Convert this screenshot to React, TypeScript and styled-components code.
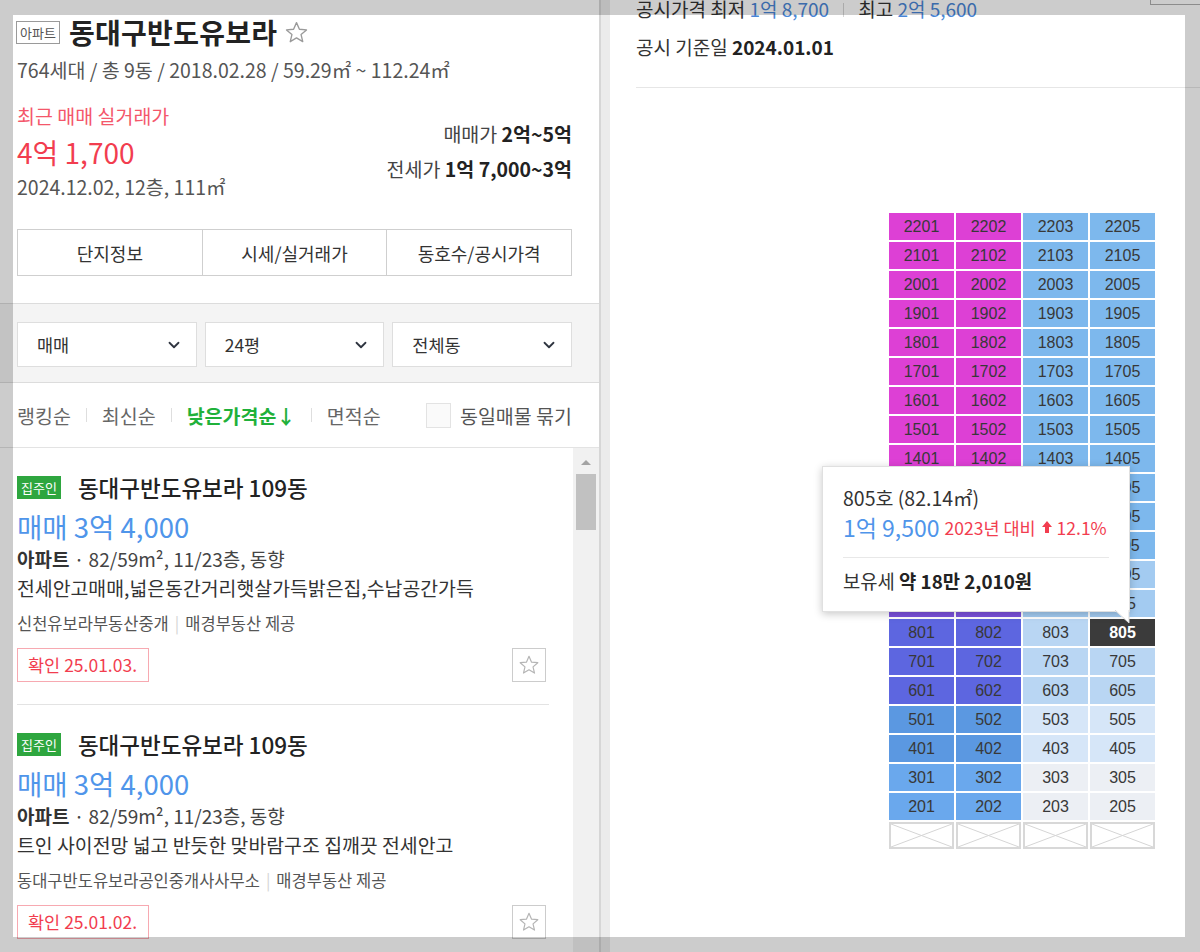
import React from 'react';
import styled, { createGlobalStyle } from 'styled-components';
import { ChevronDown } from 'lucide-react';

const GlobalStyle = createGlobalStyle`
  html, body {
    margin: 0;
    padding: 0;
    width: 1200px;
    height: 952px;
    overflow: hidden;
    background: #fff;
  }
  body {
    font-family: "Noto Sans CJK KR", "Noto Sans", sans-serif;
    color: #333;
  }
  * { box-sizing: border-box; }
`;

const Page = styled.div`
  position: relative;
  display: flex;
  width: 1200px;
  height: 952px;
  overflow: hidden;
`;

// capture frame: everything outside the selection is dimmed
const Shade = styled.div`
  position: absolute;
  left: 13px;
  top: 15px;
  width: 1172px;
  height: 922px;
  box-shadow: 0 0 0 1200px rgba(0, 0, 0, 0.2);
  pointer-events: none;
  z-index: 10;
`;

/* ---------- left panel ---------- */

const LeftPanel = styled.aside`
  width: 601px;
  flex-shrink: 0;
  display: flex;
  flex-direction: column;
  border-right: 2px solid #d6d6d6;
`;

const Gutter = styled.div`
  width: 9px;
  flex-shrink: 0;
  background: #ebebeb;
`;

const Header = styled.header`
  padding: 16px 27px 27px 16px;
`;

const TitleRow = styled.div`
  display: flex;
  align-items: center;
  height: 32px;
`;

const TypeBadge = styled.span`
  height: 23px;
  padding: 0 3px;
  border: 1px solid #9a9a9a;
  font-size: 13px;
  line-height: 21px;
  color: #555;
`;

const ComplexName = styled.h1`
  margin: 0 0 0 9px;
  font-size: 28px;
  font-weight: 700;
  line-height: 32px;
  letter-spacing: 0.3px;
  color: #222;
`;

const FavStar = styled.span`
  display: flex;
  margin-left: 7px;
`;

const SubLine = styled.div`
  margin-top: 11px;
  padding-left: 1px;
  font-size: 19.5px;
  line-height: 22px;
  color: #555;
`;

const PriceBlock = styled.div`
  display: flex;
  justify-content: space-between;
  align-items: center;
  margin-top: 24px;
  padding-left: 1px;
`;

const RecentLabel = styled.div`
  font-size: 19.5px;
  line-height: 22px;
  color: #f4576b;
`;

const RecentPrice = styled.div`
  margin: 7px 0 6px;
  font-size: 28px;
  line-height: 36px;
  color: #f23d4f;
`;

const RecentMeta = styled.div`
  font-size: 19.5px;
  line-height: 22px;
  color: #555;
`;

const RangeList = styled.div`
  display: flex;
  flex-direction: column;
  align-items: flex-end;
  gap: 11px;
`;

const RangeLine = styled.div`
  font-size: 19.5px;
  line-height: 24px;
  color: #444;
  b { color: #222; }
`;

const Tabs = styled.nav`
  display: flex;
  margin-top: 31px;
  margin-left: 1px;
  height: 47px;
  border: 1px solid #cfcfcf;
`;

const Tab = styled.div`
  flex: 1;
  display: flex;
  align-items: center;
  justify-content: center;
  font-size: 18px;
  color: #333;
  & + & { border-left: 1px solid #cfcfcf; }
`;

const FilterBar = styled.div`
  display: flex;
  gap: 8px;
  padding: 18px 27px 15px 17px;
  background: #f4f4f4;
  border-top: 1px solid #dcdcdc;
  border-bottom: 1px solid #dcdcdc;
`;

const Select = styled.div`
  flex: 1;
  height: 45px;
  display: flex;
  align-items: center;
  justify-content: space-between;
  padding: 0 13px 0 19px;
  background: #fff;
  border: 1px solid #dedede;
  font-size: 17.5px;
  color: #333;
`;

const SortRow = styled.div`
  display: flex;
  align-items: center;
  height: 65px;
  padding: 0 27px 0 17px;
  border-bottom: 1px solid #e3e3e3;
`;

const SortItem = styled.span<{ $active?: boolean }>`
  font-size: 19.5px;
  color: ${p => (p.$active ? '#1fb13a' : '#666')};
  font-weight: ${p => (p.$active ? 700 : 400)};
`;

const SortSep = styled.span`
  width: 1px;
  height: 14px;
  margin: 0 15px;
  background: #dedede;
`;

const CheckBox = styled.span`
  width: 25px;
  height: 25px;
  margin-left: auto;
  border: 1px solid #e3e3e3;
  background: #fafafa;
`;

const CheckLabel = styled.span`
  margin-left: 9px;
  font-size: 19.5px;
  color: #555;
`;

const ListArea = styled.div`
  flex: 1;
  display: flex;
  min-height: 0;
`;

const ListBody = styled.div`
  flex: 1;
  padding: 0 24px 0 17px;
  overflow: hidden;
`;

const ScrollTrack = styled.div`
  width: 26px;
  display: flex;
  flex-direction: column;
  align-items: center;
  padding-top: 12px;
  background: #f1f1f1;
`;

const ScrollArrow = styled.span`
  width: 0;
  height: 0;
  border-left: 5px solid transparent;
  border-right: 5px solid transparent;
  border-bottom: 5px solid #a3a3a3;
`;

const ScrollThumb = styled.span`
  width: 20px;
  height: 56px;
  margin-top: 9px;
  background: #c1c1c1;
`;

const Item = styled.article`
  padding: 24px 0 22px;
  border-bottom: 1px solid #e3e3e3;
`;

const ItemTitleRow = styled.div`
  display: flex;
  align-items: center;
  height: 30px;
`;

const OwnerBadge = styled.span`
  height: 23px;
  padding: 0 4px;
  background: #2ea63f;
  color: #fff;
  font-size: 13px;
  line-height: 23px;
`;

const ItemTitle = styled.h3`
  margin: 0 0 0 17px;
  font-size: 22.5px;
  font-weight: 500;
  line-height: 30px;
  color: #222;
`;

const ItemPrice = styled.div`
  margin-top: 7px;
  font-size: 27.5px;
  line-height: 34px;
  color: #4f95ea;
`;

const ItemInfo = styled.div`
  margin-top: 4px;
  font-size: 19px;
  line-height: 24px;
  color: #444;
  b { color: #333; }
`;

const ItemDesc = styled.div`
  margin-top: 5px;
  font-size: 19.4px;
  line-height: 24px;
  color: #333;
  white-space: nowrap;
`;

const ItemAgent = styled.div`
  margin-top: 12px;
  font-size: 16.5px;
  line-height: 22px;
  color: #555;
  span { margin: 0 6px; color: #d5d5d5; }
`;

const ItemFoot = styled.div`
  display: flex;
  justify-content: space-between;
  align-items: center;
  margin-top: 14px;
`;

const Confirmed = styled.span`
  height: 34px;
  padding: 0 11px 0 10px;
  border: 1px solid #f7a9b1;
  font-size: 17.5px;
  line-height: 32px;
  color: #f23d4f;
`;

const StarButton = styled.span`
  width: 34px;
  height: 34px;
  display: flex;
  align-items: center;
  justify-content: center;
  border: 1px solid #cccccc;
  margin-right: 3px;
`;

/* ---------- right panel ---------- */

const RightPanel = styled.main`
  flex: 1;
  display: flex;
  flex-direction: column;
`;

const PriceHeader = styled.div`
  display: flex;
  margin-left: 26px;
  padding-bottom: 28px;
  border-bottom: 1px solid #e6e6e6;
`;

const HeaderText = styled.div`
  flex: 1;
`;

const HeaderLine = styled.div<{ $gap?: number }>`
  margin-top: ${p => p.$gap ?? 0}px;
  font-size: 19px;
  line-height: ${p => (p.$gap ? 24 : 18)}px;
  color: #333;
  em { font-style: normal; color: #4a86d6; }
  b { color: #222; }
  i { display: inline-block; width: 1px; height: 14px; margin: 0 14px; background: #d5d5d5; }
`;

const HeaderButton = styled.span`
  width: 50px;
  height: 5px;
  border: 1px solid #b0b0b0;
  border-top: none;
  border-right: none;
`;

const BuildingArea = styled.section`
  padding: 125px 0 0 279px;
`;

const BuildingWrap = styled.div`
  position: relative;
  width: 268px;
`;

const FloorGrid = styled.div`
  display: grid;
  grid-template-columns: repeat(4, 65px);
  grid-auto-rows: 27px;
  gap: 2px;
`;

const Unit = styled.div<{ $bg: string; $picked?: boolean }>`
  display: flex;
  align-items: center;
  justify-content: center;
  background: ${p => p.$bg};
  font-family: "Liberation Sans", Arial, sans-serif;
  font-size: 16px;
  font-weight: ${p => (p.$picked ? 700 : 400)};
  color: ${p => (p.$picked ? '#fff' : '#383838')};
`;

const EmptyUnit = styled.div`
  display: flex;
  border: 2px solid #d8d8d8;
  background: #fff;
`;

const Tooltip = styled.div`
  position: absolute;
  left: -67px;
  top: 253px;
  width: 308px;
  padding: 20px 20px 18px;
  background: #fff;
  border: 1px solid #e0e0e0;
  box-shadow: 0 2px 8px rgba(0, 0, 0, 0.22);
  z-index: 2;
`;

const TipArrow = styled.svg`
  position: absolute;
  right: -1px;
  bottom: -13px;
`;

const TipUnit = styled.div`
  font-size: 19.5px;
  line-height: 22px;
  color: #333;
`;

const TipPrice = styled.div`
  display: flex;
  align-items: center;
  margin-top: 4px;
  height: 28px;
  font-size: 23px;
  color: #4f95ea;
`;

const TipDiff = styled.span`
  display: flex;
  align-items: center;
  margin-left: 5px;
  font-size: 17.5px;
  color: #f23d4f;
  svg { margin: 0 5px 0 6px; }
`;

const TipDivider = styled.hr`
  margin: 16px 0 11px;
  border: none;
  border-top: 1px solid #e8e8e8;
`;

const TipTax = styled.div`
  font-size: 18.8px;
  line-height: 24px;
  color: #333;
  b { color: #222; }
`;

/* ---------- data ---------- */

const listings = [
  {
    desc: '전세안고매매,넓은동간거리햇살가득밝은집,수납공간가득',
    agent: '신천유보라부동산중개',
    date: '25.01.03.',
  },
  {
    desc: '트인 사이전망 넓고 반듯한 맞바람구조 집깨끗 전세안고',
    agent: '동대구반도유보라공인중개사사무소',
    date: '25.01.02.',
  },
];

const units = ['01', '02', '03', '05'];
const floors = Array.from({ length: 21 }, (_, i) => 22 - i);

function leftColor(f: number) {
  if (f >= 12) return '#dd40d5';
  if (f >= 10) return '#a54ad8';
  if (f === 9) return '#7b52dc';
  if (f >= 6) return '#5d66e0';
  if (f >= 4) return '#5b98e1';
  return '#6aa8ed';
}

function rightColor(f: number) {
  if (f >= 11) return '#7db8ed';
  if (f >= 9) return '#a3cbf1';
  if (f >= 6) return '#b9d6f3';
  if (f >= 4) return '#d6e6f8';
  return '#eceff4';
}

const StarIcon = ({ size, color }: { size: number; color: string }) => (
  <svg width={size} height={size} viewBox="0 0 24 24">
    <polygon
      points="12,2.5 14.8,8.9 21.6,9.5 16.4,14 18,20.8 12,17.2 6,20.8 7.6,14 2.4,9.5 9.2,8.9"
      fill="none"
      stroke={color}
      strokeWidth="1.3"
      strokeLinejoin="round"
    />
  </svg>
);

export default function App() {
  return (
    <>
      <GlobalStyle />
      <Page>
        <LeftPanel>
          <Header>
            <TitleRow>
              <TypeBadge>아파트</TypeBadge>
              <ComplexName>동대구반도유보라</ComplexName>
              <FavStar>
                <StarIcon size={25} color="#9a9a9a" />
              </FavStar>
            </TitleRow>
            <SubLine>764세대 / 총 9동 / 2018.02.28 / 59.29㎡ ~ 112.24㎡</SubLine>
            <PriceBlock>
              <div>
                <RecentLabel>최근 매매 실거래가</RecentLabel>
                <RecentPrice>4억 1,700</RecentPrice>
                <RecentMeta>2024.12.02, 12층, 111㎡</RecentMeta>
              </div>
              <RangeList>
                <RangeLine>
                  매매가 <b>2억~5억</b>
                </RangeLine>
                <RangeLine>
                  전세가 <b>1억 7,000~3억</b>
                </RangeLine>
              </RangeList>
            </PriceBlock>
            <Tabs>
              <Tab>단지정보</Tab>
              <Tab>시세/실거래가</Tab>
              <Tab>동호수/공시가격</Tab>
            </Tabs>
          </Header>

          <FilterBar>
            {['매매', '24평', '전체동'].map(label => (
              <Select key={label}>
                {label}
                <ChevronDown size={18} strokeWidth={2.4} color="#2f3540" />
              </Select>
            ))}
          </FilterBar>

          <SortRow>
            <SortItem>랭킹순</SortItem>
            <SortSep />
            <SortItem>최신순</SortItem>
            <SortSep />
            <SortItem $active>낮은가격순↓</SortItem>
            <SortSep />
            <SortItem>면적순</SortItem>
            <CheckBox />
            <CheckLabel>동일매물 묶기</CheckLabel>
          </SortRow>

          <ListArea>
            <ListBody>
              {listings.map(item => (
                <Item key={item.date}>
                  <ItemTitleRow>
                    <OwnerBadge>집주인</OwnerBadge>
                    <ItemTitle>동대구반도유보라 109동</ItemTitle>
                  </ItemTitleRow>
                  <ItemPrice>매매 3억 4,000</ItemPrice>
                  <ItemInfo>
                    <b>아파트</b> · 82/59m², 11/23층, 동향
                  </ItemInfo>
                  <ItemDesc>{item.desc}</ItemDesc>
                  <ItemAgent>
                    {item.agent}
                    <span>|</span>
                    매경부동산 제공
                  </ItemAgent>
                  <ItemFoot>
                    <Confirmed>확인 {item.date}</Confirmed>
                    <StarButton>
                      <StarIcon size={22} color="#b5b5b5" />
                    </StarButton>
                  </ItemFoot>
                </Item>
              ))}
            </ListBody>
            <ScrollTrack>
              <ScrollArrow />
              <ScrollThumb />
            </ScrollTrack>
          </ListArea>
        </LeftPanel>

        <Gutter />

        <RightPanel>
          <PriceHeader>
            <HeaderText>
              <HeaderLine>
                공시가격 최저 <em>1억 8,700</em>
                <i />
                최고 <em>2억 5,600</em>
              </HeaderLine>
              <HeaderLine $gap={17}>
                공시 기준일 <b>2024.01.01</b>
              </HeaderLine>
            </HeaderText>
            <HeaderButton />
          </PriceHeader>

          <BuildingArea>
            <BuildingWrap>
              <FloorGrid>
                {floors.map(f =>
                  units.map((u, i) => {
                    const picked = f === 8 && u === '05';
                    const bg = picked ? '#3b3b3b' : i < 2 ? leftColor(f) : rightColor(f);
                    return (
                      <Unit key={`${f}${u}`} $bg={bg} $picked={picked}>
                        {f}
                        {u}
                      </Unit>
                    );
                  })
                )}
                {units.map(u => (
                  <EmptyUnit key={`x${u}`}>
                    <svg width="100%" height="100%" viewBox="0 0 61 23" preserveAspectRatio="none">
                      <line x1="0" y1="0" x2="61" y2="23" stroke="#d5d5d5" strokeWidth="1" />
                      <line x1="61" y1="0" x2="0" y2="23" stroke="#d5d5d5" strokeWidth="1" />
                    </svg>
                  </EmptyUnit>
                ))}
              </FloorGrid>

              <Tooltip>
                <TipUnit>805호 (82.14㎡)</TipUnit>
                <TipPrice>
                  1억 9,500
                  <TipDiff>
                    2023년 대비
                    <svg width="10" height="12" viewBox="0 0 10 12">
                      <polygon points="5,0 10,6 7,6 7,12 3,12 3,6 0,6" fill="#f23d4f" />
                    </svg>
                    12.1%
                  </TipDiff>
                </TipPrice>
                <TipDivider />
                <TipTax>
                  보유세 <b>약 18만 2,010원</b>
                </TipTax>
                <TipArrow width="16" height="14" viewBox="0 0 16 14">
                  <polygon points="0,0 15,0 15,13" fill="#fff" />
                  <polyline points="1,0 15,13 15,0" fill="none" stroke="#d8d8d8" strokeWidth="1" />
                </TipArrow>
              </Tooltip>
            </BuildingWrap>
          </BuildingArea>
        </RightPanel>

        <Shade />
      </Page>
    </>
  );
}
